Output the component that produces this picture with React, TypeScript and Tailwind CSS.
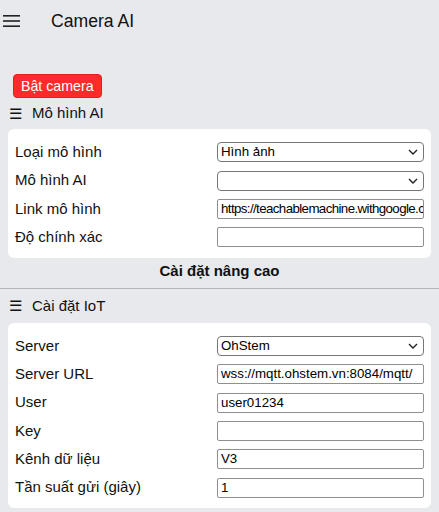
import React from 'react';

interface Row {
    label: string;
    kind: 'select' | 'input';
    value: string;
    tight?: boolean;
}

const aiRows: Row[] = [
    { label: 'Loại mô hình', kind: 'select', value: 'Hình ảnh' },
    { label: 'Mô hình AI', kind: 'select', value: '' },
    { label: 'Link mô hình', kind: 'input', value: 'https://teachablemachine.withgoogle.com/models/', tight: true },
    { label: 'Độ chính xác', kind: 'input', value: '' },
];

const iotRows: Row[] = [
    { label: 'Server', kind: 'select', value: 'OhStem' },
    { label: 'Server URL', kind: 'input', value: 'wss://mqtt.ohstem.vn:8084/mqtt/' },
    { label: 'User', kind: 'input', value: 'user01234' },
    { label: 'Key', kind: 'input', value: '' },
    { label: 'Kênh dữ liệu', kind: 'input', value: 'V3' },
    { label: 'Tần suất gửi (giây)', kind: 'input', value: '1' },
];

const Chevron = () => (
    <svg width="10" height="6" viewBox="0 0 10 6" className="shrink-0">
        <path d="M1 1l4 4 4-4" fill="none" stroke="#222" strokeWidth="1.4" />
    </svg>
);

const Field: React.FC<{ row: Row }> = ({ row }) => {
    if (row.kind === 'select') {
        return (
            <div className="h-5 flex items-center justify-between border border-[#767676] rounded-[4px] bg-white pl-[3px] pr-[5px] text-[13.3px] text-black">
                <span className="truncate">{row.value}</span>
                <Chevron />
            </div>
        );
    }
    return (
        <div className="h-5 min-w-0 flex items-center border border-[#8f8f8f] rounded-[2px] bg-white px-[3px] text-[13.3px] text-black overflow-hidden">
            <span className={`whitespace-nowrap ${row.tight ? 'tracking-[-0.6px]' : ''}`}>{row.value}</span>
        </div>
    );
};

const Section: React.FC<{ title: string; rows: Row[]; titleH: string }> = ({ title, rows, titleH }) => (
    <div>
        <div className={`flex items-center ${titleH} pl-[9px] gap-[10px] text-[15px] text-[#111]`}>
            <span className="text-[15px] leading-none">☰</span>
            <span>{title}</span>
        </div>
        <div className="mx-2 bg-white rounded-[6px] py-3 px-[7px] flex flex-col gap-[8.3px]">
            {rows.map((row, i) => (
                <div key={i} className="grid grid-cols-[202px_minmax(0,1fr)] items-center h-5">
                    <span className="text-[15px] text-[#111] whitespace-nowrap">{row.label}</span>
                    <Field row={row} />
                </div>
            ))}
        </div>
    </div>
);

export default function App() {
    return (
        <div
            className="w-[439px] h-[512px] overflow-hidden bg-[#e8e9ed]"
            style={{ fontFamily: '"Liberation Sans", Arial, sans-serif' }}
        >
            {/* Header */}
            <div className="flex items-center h-[42px]">
                <svg width="17" height="12" viewBox="0 0 17 12" className="ml-[3px]">
                    <rect x="0" y="0" width="17" height="1.6" fill="#222" />
                    <rect x="0" y="5.2" width="17" height="1.6" fill="#222" />
                    <rect x="0" y="10.4" width="17" height="1.6" fill="#222" />
                </svg>
                <span className="ml-[31px] text-[17.6px] text-[#111]">Camera AI</span>
            </div>

            <div className="pt-8 pl-[13px] flex">
                <button className="h-6 px-[7px] rounded-[4px] bg-[#ff2b2b] border border-[#e61e1e] text-white text-[14.2px] leading-none">
                    Bật camera
                </button>
            </div>

            <Section title="Mô hình AI" rows={aiRows} titleH="h-[31px]" />

            <div className="h-[30px] pb-1 flex items-center justify-center font-bold text-[15px] text-[#111]">
                Cài đặt nâng cao
            </div>
            <div className="h-px bg-[#b5b5b5]" />

            <Section title="Cài đặt IoT" rows={iotRows} titleH="h-[34px]" />
        </div>
    );
}
